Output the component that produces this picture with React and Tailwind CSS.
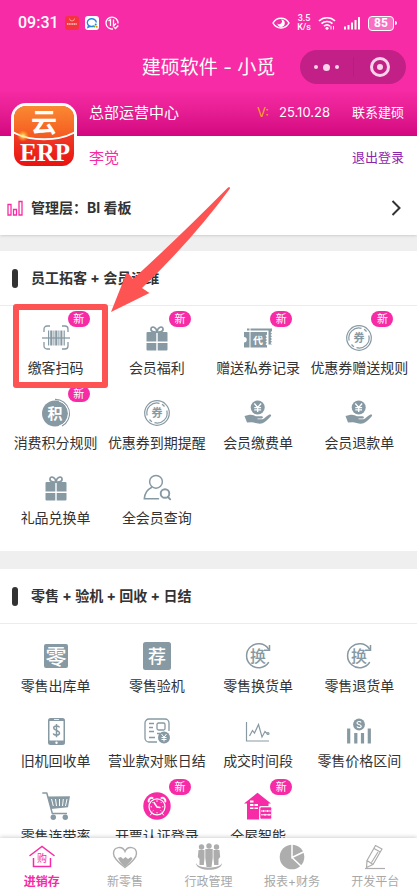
import React from "react";

const GREY = "#8799a3";
const PINK = "#f72ba5";

// every menu icon is drawn on the same 28 x 28 board
function Icon({ children }) {
  return (
    <svg viewBox="0 0 28 28" className="h-7 w-7 overflow-visible" fill="none" aria-hidden="true">
      {children}
    </svg>
  );
}

// a single character used as a part of an icon
function Glyph({ x = 14, y, size, fill = GREY, weight = 400, children }) {
  return (
    <text x={x} y={y} fontSize={size} fill={fill} fontWeight={weight} textAnchor="middle">
      {children}
    </text>
  );
}

function ScanIcon() {
  return (
    <Icon>
      <g stroke={GREY} strokeWidth="1.3">
        <path d="M2 8V5a3 3 0 0 1 3-3h3M20 2h3a3 3 0 0 1 3 3v3M26 18v4a3 3 0 0 1-3 3h-3M8 25H5a3 3 0 0 1-3-3v-4" />
        <path d="M0 14h28" />
      </g>
      <g fill={GREY}>
        <path d="M6 6.500h1.200v15h-1.200zM8.200 6.500h2.200v15h-2.200zM11.400 6.500h1v15h-1zM13.200 6.500h2.200v15h-2.200zM16.400 6.500h1v15h-1zM18.400 6.500h2v15h-2zM21.600 6.500h1.200v15h-1.200z" />
      </g>
    </Icon>
  );
}

function GiftIcon() {
  return (
    <Icon>
      <path
        d="M14 8C11 8.500 7.500 7.500 8 4.800 8.600 2 13 2.500 14 8ZM14 8C17 8.500 20.500 7.500 20 4.800 19.400 2 15 2.500 14 8Z"
        stroke={GREY}
        strokeWidth="1.700"
      />
      <path
        fill={GREY}
        d="M4.500 8H13.300V17.500H3.500V9a1 1 0 0 1 1-1ZM14.700 8H23.500a1 1 0 0 1 1 1V17.500H14.700ZM3.500 19H13.300V26.500H4.500a1 1 0 0 1-1-1ZM14.700 19H24.500V25.500a1 1 0 0 1-1 1H14.700Z"
      />
    </Icon>
  );
}

function TicketIcon() {
  return (
    <Icon>
      <path
        fill={GREY}
        d="M0 8H5.500V23.500H0V18.500A2.500 2.500 0 0 0 0 13ZM6.500 8H23V10.500L21.500 11.800 23 13.200 21.500 14.600 23 16 21.500 17.400 23 18.800 21.500 20.200 23 21.500V23.500H6.500ZM3 4.500H5.500V6.500H3ZM6.500 4.500H28V7L26.500 8.300 28 9.600 26.500 11 28 12.300 26.500 13.700 28 15 26.500 16.400 28 17.700 26.500 19 28 20.500H24.500V6.500H6.500Z"
      />
      <Glyph x={14} y={19.5} size={10} fill="#fff" weight={700}>
        代
      </Glyph>
    </Icon>
  );
}

function CouponIcon() {
  return (
    <Icon>
      <g stroke={GREY}>
        <circle cx="14" cy="14" r="12.300" strokeWidth="1.200" />
        <path
          strokeWidth="1.200"
          d="M4.200 16.500A10 10 0 0 1 16.500 4.300M19 5.300A10 10 0 0 1 21.500 7.500M23.800 11.500A10 10 0 0 1 11.500 23.700M9 22.700A10 10 0 0 1 6.500 20.500"
        />
      </g>
      <Glyph y={18} size={11} weight={700}>
        券
      </Glyph>
    </Icon>
  );
}

function PointsIcon() {
  return (
    <Icon>
      <circle cx="13" cy="14.500" r="13" fill={GREY} />
      <path d="M13 .3A14.200 14.200 0 0 1 20 27" stroke={GREY} strokeWidth="1.200" />
      <path d="M17 2A13 13 0 0 1 17 27" stroke="#fff" strokeWidth="1" />
      <Glyph x={13} y={20} size={15} fill="#fff" weight={700}>
        积
      </Glyph>
    </Icon>
  );
}

function PayIcon() {
  return (
    <Icon>
      <circle cx="13.700" cy="8.500" r="7" fill={GREY} />
      <path
        d="M10.300 4.500 13.700 8.500 17.100 4.500M13.700 8.500V13M10.300 8.600H17.100M10.300 10.800H17.100"
        stroke="#fff"
        strokeWidth="1.300"
      />
      <path
        fill={GREY}
        d="M.5 17 5.500 15.800C8.500 15.300 10 16.700 12 17.200H17.500C19.500 17.300 19.300 19.500 17.500 19.600H13.500V20.300H18.500C20.500 19.500 23 16.500 25 15.700 26.700 15.200 27.700 16 26.800 17.200 24.500 20 21.500 23 18.500 24.300 14.500 25.800 11 23.300 7.500 23.200L3 23.500Z"
      />
    </Icon>
  );
}

function MemberSearchIcon() {
  return (
    <Icon>
      <g stroke={GREY} strokeWidth="1.500" strokeLinecap="round">
        <circle cx="13" cy="7.800" r="6.400" />
        <path d="M8.500 13.500C4 15.500 1.800 19 1.300 24.800H15.500" />
        <circle cx="22" cy="19.500" r="4.300" strokeWidth="1.900" />
        <path d="M25 23 27.200 25.300" strokeWidth="1.900" />
      </g>
    </Icon>
  );
}

function StockOutIcon() {
  return (
    <Icon>
      <rect x="2" y="2" width="24" height="24" rx="2" fill={GREY} />
      <Glyph y={21.5} size={21} fill="#fff" weight={500}>
        零
      </Glyph>
    </Icon>
  );
}

function InspectIcon() {
  return (
    <Icon>
      <rect x="0" y="0" width="28" height="28" rx="2.500" fill={GREY} />
      <Glyph y={21} size={18} fill="#fff" weight={500}>
        荐
      </Glyph>
    </Icon>
  );
}

function SwapIcon() {
  return (
    <Icon>
      <path
        d="M24.500 7A12 12 0 1 0 24.500 20.500"
        stroke={GREY}
        strokeWidth="1.500"
        strokeLinecap="round"
      />
      <path d="M25.500 3V8.300H20" stroke={GREY} strokeWidth="1.500" />
      <Glyph y={20} size={16} weight={500}>
        换
      </Glyph>
    </Icon>
  );
}

function PhoneIcon() {
  return (
    <Icon>
      <rect x="6" y="1" width="17" height="27" rx="2.500" fill={GREY} />
      <rect x="7.500" y="4" width="14" height="19.500" fill="#fff" />
      <path d="M12 2.500H17" stroke="#fff" strokeWidth=".8" />
      <circle cx="14.500" cy="25.700" r="1.200" fill="#fff" />
      <path
        d="M17.300 10.500C17 8.500 11.700 8.300 11.700 11 11.700 13.700 17.500 13 17.500 16 17.500 18.800 11.700 18.700 11.400 16.300M14.500 7V20.300"
        stroke={GREY}
        strokeWidth="1.500"
      />
    </Icon>
  );
}

function StatementIcon() {
  return (
    <Icon>
      <g stroke={GREY} strokeWidth="1.300">
        <path d="M14 25H6A4 4 0 0 1 2 21V6A4 4 0 0 1 6 2H22A4 4 0 0 1 26 6V14" />
        <rect x="14" y="6" width="8" height="7" rx="1.500" />
        <path d="M6 6.500H11M6 10.500H10M6 14.500H11M6 20.500H12M14 16.500H17" />
      </g>
      <circle cx="21" cy="20.500" r="6" fill={GREY} />
      <path
        d="M18.500 17 21 20.300 23.500 17M21 20V24.500M18.500 20.500H23.500M18.500 22.500H23.500"
        stroke="#fff"
        strokeWidth="1"
      />
    </Icon>
  );
}

function TrendIcon() {
  return (
    <Icon>
      <g stroke={GREY} strokeWidth="1.200">
        <path d="M2.500 5V24H25" />
        <path d="M5.500 19 8.500 13.500 10.500 16 14.500 7.500 18 20 21 14.500 23 16.500" />
        <circle cx="24" cy="16.500" r="1" />
      </g>
    </Icon>
  );
}

function PriceRangeIcon() {
  return (
    <Icon>
      <circle cx="14" cy="7.500" r="5.900" fill={GREY} />
      <path
        d="M16 5.500C15.500 4 12 4.200 12 6 12 8 16.200 7 16.200 9.200 16.200 11.200 12.300 11 12 9.300"
        stroke="#fff"
        strokeWidth="1.200"
      />
      <path
        d="M3.700 11.500V26.500M10.800 16V26.500M17.500 16V26.500M24.300 11.500V26.500"
        stroke={GREY}
        strokeWidth="3.200"
      />
    </Icon>
  );
}

function CartIcon() {
  return (
    <Icon>
      <path
        d="M.3 1H4.800L10.300 21.500H25"
        stroke={GREY}
        strokeWidth="1.500"
        strokeLinejoin="round"
      />
      <path fill={GREY} d="M5.500 4.500 28 4.200 26 15.300 9 17Z" />
      <path
        d="M9.500 7 11.300 14M13.500 7 14.500 14M17.500 7V14M21.300 7 20.500 14M25 7 23.500 14"
        stroke="#fff"
        strokeWidth="1"
      />
      <circle cx="11.300" cy="25.200" r="2.700" fill={GREY} />
      <circle cx="23.300" cy="25.200" r="2.700" fill={GREY} />
    </Icon>
  );
}

function ClockIcon() {
  return (
    <Icon>
      <circle cx="14" cy="14" r="13.700" fill={PINK} />
      <g stroke="#fff" strokeLinecap="round">
        <circle cx="14" cy="14.800" r="8" strokeWidth="1.200" />
        <path d="M5.700 9.500A3 3 0 0 1 9.500 6M18.500 6A3 3 0 0 1 22.300 9.500" strokeWidth="2" />
        <path d="M11 10.500 14 15 17 15.500" strokeWidth="1.400" />
        <path
          d="M14 8.700V9.500M14 20.500V21M8 14.800H8.600M19.500 14.800H20M9.800 10.500 10 10.700M18.200 10.500 18 10.700M9.800 19 10 18.800M18.200 19 18 18.800M8.500 21.500 7.500 23M19.500 21.500 20.500 23"
          strokeWidth="1"
        />
      </g>
    </Icon>
  );
}

function SmartHomeIcon() {
  return (
    <Icon>
      <path
        fill={PINK}
        d="M13.500.8 27 11.500H24.500V14H17A2 2 0 0 0 15 16V27.500H3V11.500H0Z"
      />
      <path
        fill="#fff"
        d="M6 8.500H9.500V10.500H6ZM6 12H9.500V14H6ZM10.500 12H14V14H10.500ZM6 15.500H9.500V17H6ZM10.500 15.500H14V17H10.500Z"
      />
      <rect x="15.800" y="14.800" width="12" height="12.400" rx="1.500" fill={PINK} stroke="#fff" />
      <path
        d="M17 19H27M17 22.800H27M19.500 18V20M23.500 18V20M21 21.800V23.800M25 21.800V23.800"
        stroke="#fff"
        strokeWidth="1"
      />
    </Icon>
  );
}

const memberItems = [
  { label: "缴客扫码", icon: ScanIcon, isNew: true, marked: true },
  { label: "会员福利", icon: GiftIcon, isNew: true },
  { label: "赠送私券记录", icon: TicketIcon, isNew: true },
  { label: "优惠券赠送规则", icon: CouponIcon, isNew: true },
  { label: "消费积分规则", icon: PointsIcon, isNew: true },
  { label: "优惠券到期提醒", icon: CouponIcon },
  { label: "会员缴费单", icon: PayIcon },
  { label: "会员退款单", icon: PayIcon },
  { label: "礼品兑换单", icon: GiftIcon },
  { label: "全会员查询", icon: MemberSearchIcon },
];

const retailItems = [
  { label: "零售出库单", icon: StockOutIcon },
  { label: "零售验机", icon: InspectIcon },
  { label: "零售换货单", icon: SwapIcon },
  { label: "零售退货单", icon: SwapIcon },
  { label: "旧机回收单", icon: PhoneIcon },
  { label: "营业款对账日结", icon: StatementIcon },
  { label: "成交时间段", icon: TrendIcon },
  { label: "零售价格区间", icon: PriceRangeIcon },
  { label: "零售连带率", icon: CartIcon },
  { label: "开票认证登录", icon: ClockIcon, isNew: true },
  { label: "全屋智能", icon: SmartHomeIcon, isNew: true },
];

function StatusBar() {
  return (
    <div className="flex h-[46px] items-center justify-between pr-5 pl-[18px] font-['Roboto',sans-serif] text-white">
      <div className="flex items-center gap-[6px]">
        <span className="text-base leading-5 font-medium">09:31</span>
        <svg viewBox="0 0 14 14" className="h-[14px] w-[14px]" fill="none" aria-hidden="true">
          <rect width="14" height="14" rx="3" fill="#f5333f" />
          <path d="M4.500 2.500A2.500 2.500 0 0 0 9.500 2.500" stroke="#ffb3a8" strokeWidth=".8" />
          <path d="M2 8H12" stroke="#ffd5d0" strokeWidth="1.600" strokeDasharray="1.200 .5" />
        </svg>
        <svg viewBox="0 0 14 14" className="h-[14px] w-[14px]" fill="none" aria-hidden="true">
          <rect width="14" height="14" rx="3" fill="#fff" />
          <path
            d="M9 10A4.500 3.900 0 1 1 11.300 6.500M3.500 9.500 3 11.300 5.300 10.300"
            stroke="#2a82e4"
            strokeWidth="1.400"
          />
          <circle cx="10.700" cy="8.600" r="1" fill="#2a82e4" />
          <circle cx="9.300" cy="10.400" r="1" fill="#4caf50" />
          <circle cx="11.700" cy="10.800" r="1" fill="#fb8c00" />
        </svg>
        <svg viewBox="0 0 14 14" className="h-[14px] w-[14px]" fill="none" aria-hidden="true">
          <g stroke="#fff" strokeWidth="1.300">
            <path d="M13 7.500A6 6 0 1 0 8 13" />
            <path d="M3.500 5 5.500 3.500V10M8.500 3.500V10L11 7.500" />
            <path d="M9 11 10.500 12.500 13.300 9.500" />
          </g>
        </svg>
      </div>
      <div className="flex items-center gap-[7px]">
        <svg viewBox="0 0 18 14" className="h-[14px] w-[18px]" fill="none" aria-hidden="true">
          <path d="M1 7C4.500.5 13.500.5 17 7 13.500 13.500 4.500 13.500 1 7Z" stroke="#fff" strokeWidth="1.500" />
          <path d="M9 3.500A3.700 3.700 0 1 1 5.400 7.500 2.600 2.600 0 0 0 9 3.500Z" fill="#fff" />
        </svg>
        <div className="text-center text-[9px] leading-[9px] font-medium">
          <p>3.5</p>
          <p>K/s</p>
        </div>
        <svg viewBox="0 0 18 14" className="h-[14px] w-[18px]" fill="none" aria-hidden="true">
          <g stroke="#fff" strokeWidth="1.700">
            <path d="M1 5A11.500 11.500 0 0 1 17 5M3.500 7.700A8 8 0 0 1 14.500 7.700M6 10.200A4.500 4.500 0 0 1 12 10.200" />
          </g>
          <circle cx="9" cy="12.300" r="1.500" fill="#fff" />
          <path d="M13 10V13.500M15.500 10V13.500" stroke="#fff" strokeWidth="1" />
        </svg>
        <svg viewBox="0 0 18 14" className="h-[14px] w-[18px]" aria-hidden="true">
          <path
            fill="#fff"
            d="M1 10.500H3V13.500H1ZM4.500 9H6.500V13.500H4.500ZM8 6.500H10V13.500H8ZM11.500 4H13.500V13.500H11.500ZM15 1H17V13.500H15Z"
          />
        </svg>
        <div className="flex items-center gap-px">
          <span className="flex h-[15px] w-[26px] items-center justify-center rounded-[4px] border border-white bg-[#f96fc2] text-[12px] leading-3 font-bold">
            85
          </span>
          <span className="h-1 w-0.5 rounded-r-sm bg-white" />
        </div>
      </div>
    </div>
  );
}

function Logo() {
  return (
    <svg
      viewBox="0 0 66 66"
      className="absolute -bottom-[33px] left-[11px] h-[66px] w-[66px]"
      role="img"
      aria-label="云 ERP"
    >
      <defs>
        <linearGradient id="logoTop" x1="0" y1="0" x2="0" y2="1">
          <stop offset="0" stopColor="#fb8d34" />
          <stop offset="1" stopColor="#f4581f" />
        </linearGradient>
        <linearGradient id="logoBottom" x1="0" y1="0" x2="0" y2="1">
          <stop offset=".4" stopColor="#f0432a" />
          <stop offset="1" stopColor="#e90e0e" />
        </linearGradient>
        <radialGradient id="spark">
          <stop offset="0" stopColor="#fff59d" />
          <stop offset="1" stopColor="#ffb300" stopOpacity="0" />
        </radialGradient>
        <clipPath id="logoClip">
          <rect x="3" y="3" width="60" height="60" rx="12" />
        </clipPath>
      </defs>
      <rect width="66" height="66" rx="15" fill="#fff" />
      <g clipPath="url(#logoClip)">
        <rect width="66" height="66" fill="url(#logoBottom)" />
        <path
          d="M0 0H66V28C48 39 18 39 0 28Z"
          fill="url(#logoTop)"
          stroke="#fff"
          strokeWidth="1.800"
        />
        <circle cx="12" cy="33" r="6" fill="url(#spark)" />
      </g>
      <text x="33" y="29" fontSize="26" fontWeight="700" fill="#fff" textAnchor="middle">
        云
      </text>
      <text
        x="34"
        y="58"
        fontSize="25"
        fontWeight="700"
        fill="#fff"
        textAnchor="middle"
        className="font-['Liberation_Serif',serif]"
      >
        ERP
      </text>
    </svg>
  );
}

function Header() {
  return (
    <header className="relative bg-[#f72ba5]">
      <StatusBar />
      <div className="relative flex h-11 items-center justify-center">
        <h1 className="text-[19px] leading-6 text-white">建硕软件 - 小觅</h1>
        <div className="absolute top-1 right-[11px] flex h-[34px] w-[106px] items-center rounded-full bg-[#c22087]">
          <button aria-label="更多" className="flex flex-1 items-center justify-center gap-[5px]">
            <span className="h-1 w-1 rounded-full bg-[#f8d3ea]" />
            <span className="h-[7px] w-[7px] rounded-full bg-[#f8d3ea]" />
            <span className="h-1 w-1 rounded-full bg-[#f8d3ea]" />
          </button>
          <span className="h-5 w-px bg-[#b51d7e]" />
          <button aria-label="关闭" className="flex flex-1 items-center justify-center">
            <span className="flex h-5 w-5 items-center justify-center rounded-full border-[3px] border-[#f8d3ea]">
              <span className="h-[6px] w-[6px] rounded-full bg-[#f8d3ea]" />
            </span>
          </button>
        </div>
      </div>
      <div className="flex h-[46px] items-center bg-linear-to-b from-[#f72ba5] to-[#d3067f] pr-[13px] pl-[89px] text-[13px] text-white">
        <p className="text-[15px]">总部运营中心</p>
        <p className="ml-auto flex gap-[10px]">
          <span className="text-[#ffa726]">V:</span>
          <span>25.10.28</span>
        </p>
        <a href="#contact" className="ml-[22px]">
          联系建硕
        </a>
      </div>
      <Logo />
    </header>
  );
}

// red frame + arrow that point at the item to tap
function Marker() {
  return (
    <>
      <span className="absolute -top-[2px] -right-[2px] -bottom-[7px] left-2 z-10 rounded-[3px] border-[6px] border-[#fe5353]" />
      <svg
        viewBox="0 0 120 126"
        className="pointer-events-none absolute -top-[120px] left-[106px] z-10 h-[126px] w-[120px]"
        aria-hidden="true"
      >
        <path
          fill="#fe5353"
          d="M0 126 15.500 87Q17 86 22 93Q66 53 117 1.500Q119 0 119 2.500Q82 53 31 102L38.500 107Z"
        />
      </svg>
    </>
  );
}

function MenuItem({ item }) {
  const ItemIcon = item.icon;
  return (
    <li className="relative">
      <button className="flex h-[75px] w-full flex-col items-center gap-[6px] pt-[18px]">
        <ItemIcon />
        <span className="text-sm leading-5 whitespace-nowrap">{item.label}</span>
      </button>
      {item.isNew && (
        <span className="absolute top-[5px] left-1/2 ml-3 flex h-4 w-[22px] items-center justify-center rounded-full bg-[#f72ba5] text-[11px] text-white">
          新
        </span>
      )}
      {item.marked && <Marker />}
    </li>
  );
}

function MenuSection({ title, items }) {
  return (
    <section className="bg-white pb-5">
      <h2 className="flex h-[55px] items-center gap-[13px] border-b border-[#ececec] pl-3 text-sm font-bold">
        <span className="h-[19px] w-[6px] rounded-full bg-[#333]" />
        {title}
      </h2>
      <ul className="grid grid-cols-4 pr-[7px] pl-[5px]">
        {items.map((item) => (
          <MenuItem key={item.label} item={item} />
        ))}
      </ul>
    </section>
  );
}

const NAV = "#adadad";

const navItems = [
  {
    label: "进销存",
    active: true,
    icon: (
      <Icon>
        <g stroke={PINK} strokeWidth="1.500">
          <path d="M2 12.500 14 3.500 26 12.500" strokeLinecap="round" />
          <path d="M5.500 15V23.500H22.500V15" />
        </g>
        <Glyph y={19} size={10} fill={PINK}>
          购
        </Glyph>
      </Icon>
    ),
  },
  {
    label: "新零售",
    icon: (
      <Icon>
        <path
          d="M14 24.500C10 21.500 2.500 16 2.500 10.500 2.500 3.500 11.500 2.500 14 8.500 16.500 2.500 25.500 3.500 25.500 10.500 25.500 16 18 21.500 14 24.500Z"
          stroke={NAV}
          strokeWidth="1.400"
        />
        <path
          fill={NAV}
          d="M7 15 10 14 12 16 14.500 14 17 16 20 14 21.500 15.500C19.500 19 16.500 22 14 24 11.500 22 8.500 19 7 15Z"
        />
      </Icon>
    ),
  },
  {
    label: "行政管理",
    icon: (
      <Icon>
        <g fill={NAV}>
          <circle cx="6.500" cy="4" r="2.700" />
          <circle cx="14" cy="3" r="2.700" />
          <circle cx="21.500" cy="4" r="2.700" />
          <path d="M3.500 7H9.500V15L8.800 22H4.500V16L2.800 14ZM10.300 6H17.700V15L16.500 24H11.500L10.300 15ZM18.500 7H24.500L25.200 14 23.500 16V22H19.200L18.500 15Z" />
          <path d="M1 20C1 25 8 26.800 14 26.800S27 25 27 20C25.500 23.500 20 24.500 14 24.500S2.500 23.500 1 20Z" />
        </g>
      </Icon>
    ),
  },
  {
    label: "报表+财务",
    icon: (
      <Icon>
        <circle cx="14" cy="14" r="12.300" fill={NAV} />
        <path d="M14 1V14.500L26.500 8.500M14 14.500 23.500 23.500" stroke="#fff" strokeWidth="1.500" />
      </Icon>
    ),
  },
  {
    label: "开发平台",
    icon: (
      <Icon>
        <g stroke={NAV} strokeWidth="1.200" strokeLinejoin="round">
          <path d="M14.500 2.500 21 6 12 21.500 5.500 24.500 6 17.500ZM13 5.500 19.300 9M6 17.500 12 21.500M17 9 10.500 19.500" />
          <path d="M4 25.500H24" />
        </g>
      </Icon>
    ),
  },
];

function BottomNav() {
  return (
    <nav className="z-20 flex h-[50px] shrink-0 bg-white shadow-[0_-1px_4px_rgba(0,0,0,0.18)]">
      {navItems.map((item) => (
        <a
          key={item.label}
          href={`#${item.label}`}
          className={`flex flex-1 flex-col items-center gap-[3px] pt-[5px] text-xs leading-4 whitespace-nowrap ${
            item.active ? "font-bold text-[#f72ba5]" : "text-[#a8a8a8]"
          }`}
        >
          {item.icon}
          {item.label}
        </a>
      ))}
    </nav>
  );
}

export default function App() {
  return (
    <div className="flex h-dvh flex-col overflow-hidden bg-[#efefef] font-['Inter','Noto_Sans_CJK_SC',sans-serif] text-[#333]">
      <main className="flex-1 overflow-x-hidden overflow-y-auto [scrollbar-width:none]">
        <Header />
        <div className="bg-white shadow-sm">
          <div className="flex h-11 items-center justify-between pr-[13px] pl-[89px]">
            <p className="text-[15px] text-[#f72ba5]">李觉</p>
            <a href="#logout" className="text-[13px] text-[#8e24aa]">
              退出登录
            </a>
          </div>
          <a href="#bi" className="flex h-[55px] items-center pr-4 pl-[7px] text-sm font-bold">
            <svg viewBox="0 0 16 16" className="mr-2 h-4 w-4" fill="none" aria-hidden="true">
              <path
                d="M1 4.500H4V15H1ZM6.500 9.500H9.500V15H6.500ZM12 1.500H15V15H12Z"
                stroke={PINK}
                strokeWidth="1.300"
              />
            </svg>
            管理层：BI 看板
            <svg viewBox="0 0 10 16" className="ml-auto h-4 w-[10px]" fill="none" aria-hidden="true">
              <path d="M1.500 1 8.500 8 1.500 15" stroke="#333" strokeWidth="2" />
            </svg>
          </a>
        </div>
        <div className="mt-4 flex flex-col gap-[18px]">
          <MenuSection title="员工拓客 + 会员运维" items={memberItems} />
          <MenuSection title="零售 + 验机 + 回收 + 日结" items={retailItems} />
        </div>
      </main>
      <BottomNav />
    </div>
  );
}
